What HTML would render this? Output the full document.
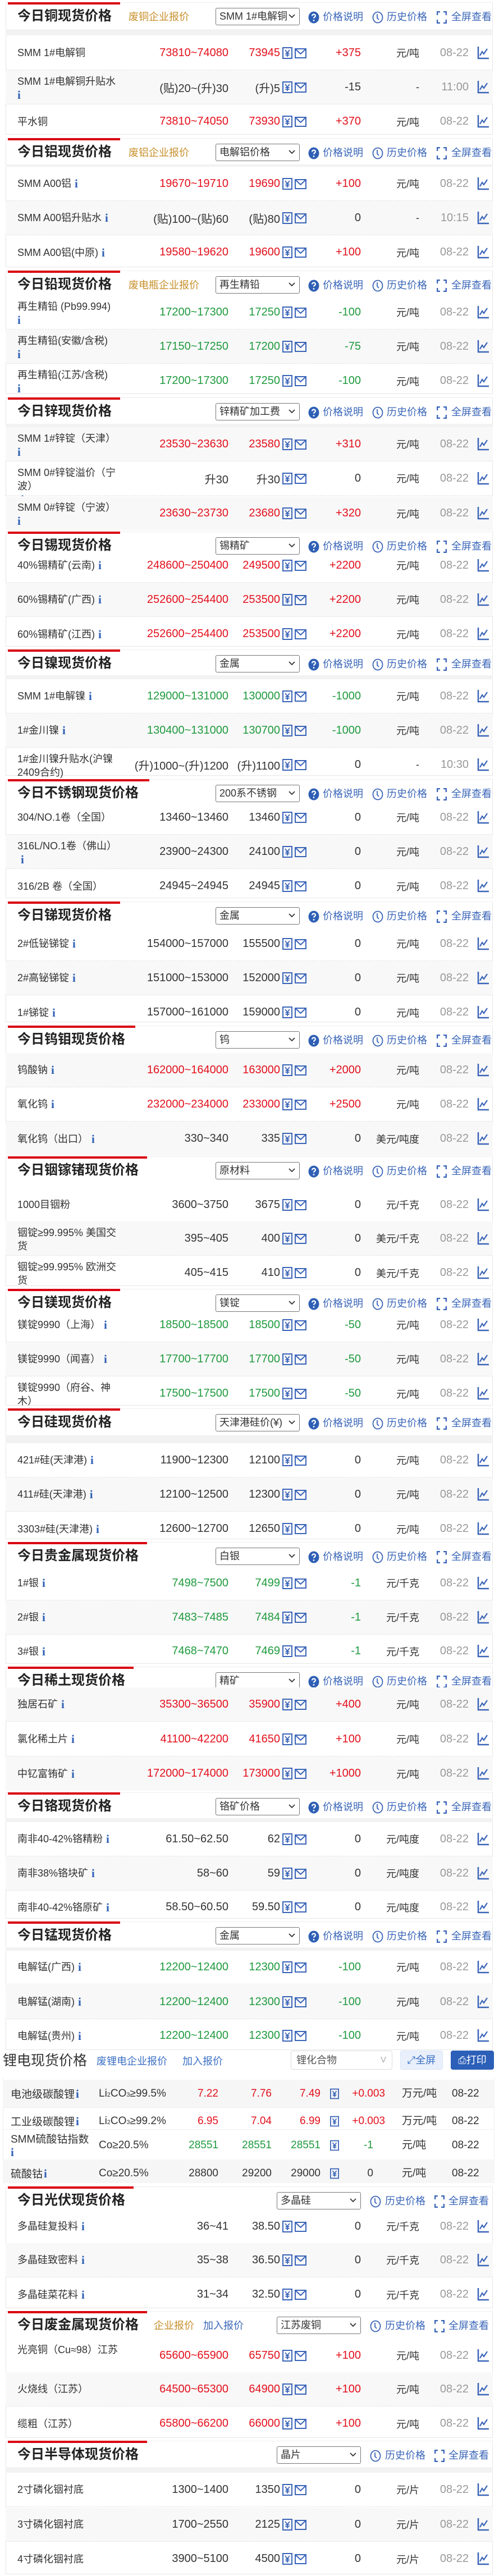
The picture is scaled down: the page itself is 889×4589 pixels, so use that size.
<!DOCTYPE html>
<html><head><meta charset="utf-8">
<style>
*{margin:0;padding:0;box-sizing:border-box}
body{width:889px;height:4586px;position:relative;background:#fff;font-family:"Liberation Sans","Noto Sans CJK SC",sans-serif;color:#333;overflow:hidden}
.sec{position:absolute;left:10px;width:868px;border:1px solid #e6e6e6;border-top:1px solid #eee;background:#fff}
.bar{position:absolute;left:3px;top:-1px;height:4px;background:#d9000f}
.tt{position:absolute;left:20px;top:7px;font-size:24px;font-weight:bold;line-height:34px;color:#222;white-space:nowrap}
.lk{position:absolute;top:12px;font-size:18px;line-height:26px;color:#c78f2a;white-space:nowrap}
.bl{color:#3a66b8}
.sel{position:absolute;left:373px;top:9px;width:150px;height:31px;border:1px solid #777;border-radius:3px;font-size:18px;line-height:29px;padding-left:6px;white-space:nowrap;overflow:hidden;color:#333;background:#fff}
.sel svg{position:absolute;right:7px;top:10px}
.tl{position:absolute;top:12px;font-size:18px;line-height:26px;color:#3a66b8;white-space:nowrap}
.ic{position:absolute;top:15px}
.strip{position:absolute;left:10px;width:868px;background:#f2f2f2}
.r{position:absolute;left:10px;width:868px;height:61px;border-bottom:1px dashed #e2e2e2}
.g{background:#f8f8f8}
.r>div{position:absolute;top:0;bottom:0;display:flex;align-items:center;white-space:nowrap;font-size:20px}
.r .n{left:21px;width:190px;font-size:18px;line-height:24px;white-space:normal;display:block;padding-top:0}
.n span{display:block}
.a{left:150px;width:247px;justify-content:flex-end}
.b{left:400px;width:89px;justify-content:flex-end}
.c{left:540px;width:93px;justify-content:flex-end}
.u{left:640px;width:97px;justify-content:flex-end}
.r .u{font-size:18px}
.d{left:760px;width:65px;justify-content:flex-end;color:#999}
.R{color:#e3101c}.G{color:#1f9a3e}
.i{font-family:"Liberation Serif",serif;font-weight:bold;color:#2e5fb5;font-size:21px;margin-left:6px}
.iy{position:absolute;left:493px;top:20px}
.im{position:absolute;left:515px;top:22px}
.ch{position:absolute;left:840px;top:18px}
.nc{position:absolute;left:0;right:0;top:0;bottom:0;display:flex;align-items:center}
</style></head><body>
<svg width="0" height="0" style="position:absolute">
<defs>
<symbol id="yen" viewBox="0 0 18 21"><rect x="1" y="1" width="16" height="19" fill="none" stroke="#3a64b8" stroke-width="2"/><path d="M5 5l4 5 4-5M9 10v7M5.5 11h7M5.5 14h7" stroke="#3a64b8" stroke-width="1.8" fill="none"/></symbol>
<symbol id="mail" viewBox="0 0 21 18"><rect x="1" y="1" width="19" height="16" fill="none" stroke="#3a64b8" stroke-width="2"/><path d="M2 2l8.5 8 8.5-8" stroke="#3a64b8" stroke-width="2" fill="none"/></symbol>
<symbol id="chart" viewBox="0 0 21 24"><path d="M2 1v21h19" stroke="#3a64b8" stroke-width="2.5" fill="none"/><path d="M5 17l4-7 3 4 6-9" stroke="#3a64b8" stroke-width="2.2" fill="none"/></symbol>
<symbol id="q" viewBox="0 0 20 22"><ellipse cx="10" cy="11" rx="9.5" ry="10.5" fill="#2e5fb5"/><path d="M7 8.5c0-2 1.5-3 3-3s3 1 3 2.8c0 2-3 2.2-3 4.5" stroke="#fff" stroke-width="2.2" fill="none"/><circle cx="10" cy="16.5" r="1.4" fill="#fff"/></symbol>
<symbol id="clk" viewBox="0 0 20 22"><ellipse cx="10" cy="11" rx="8.5" ry="9.5" fill="none" stroke="#3a64b8" stroke-width="1.8"/><path d="M9 5v7l3 3" stroke="#3a64b8" stroke-width="1.8" fill="none"/></symbol>
<symbol id="fs" viewBox="0 0 18 22"><path d="M1 7V1h5M12 1h5v6M17 15v6h-5M6 21H1v-6" stroke="#3a64b8" stroke-width="2.6" fill="none"/></symbol>
<symbol id="dn" viewBox="0 0 12 8"><path d="M1 1l5 5 5-5" stroke="#333" stroke-width="1.8" fill="none"/></symbol>
</defs></svg>

<!-- 1 铜 -->
<div class="sec" style="top:4px;height:236px"><div class="bar" style="width:200px"></div><div class="tt">今日铜现货价格</div><div class="lk" style="left:218px">废铜企业报价</div><div class="sel">SMM 1#电解铜<svg width="12" height="8"><use href="#dn"/></svg></div>
<svg class="ic" style="left:538px" width="20" height="22"><use href="#q"/></svg><div class="tl" style="left:564px">价格说明</div><svg class="ic" style="left:652px" width="20" height="22"><use href="#clk"/></svg><div class="tl" style="left:678px">历史价格</div><svg class="ic" style="left:767px" width="18" height="22"><use href="#fs"/></svg><div class="tl" style="left:793px">全屏查看</div></div>
<div class="strip" style="top:52px;height:11px"></div>
<div class="r" style="top:64px"><div class="n"><div class="nc">SMM 1#电解铜</div></div><div class="a R">73810~74080</div><div class="b R">73945</div><svg class="iy" width="18" height="21"><use href="#yen"/></svg><svg class="im" width="21" height="18"><use href="#mail"/></svg><div class="c R">+375</div><div class="u">元/吨</div><div class="d">08-22</div><svg class="ch" width="21" height="24"><use href="#chart"/></svg></div>
<div class="r g" style="top:125px"><div class="n" style="padding-top:8px">SMM 1#电解铜升贴水<span class="i" style="margin:0">i</span></div><div class="a">(贴)20~(升)30</div><div class="b">(升)5</div><svg class="iy" width="18" height="21"><use href="#yen"/></svg><svg class="im" width="21" height="18"><use href="#mail"/></svg><div class="c">-15</div><div class="u">-</div><div class="d">11:00</div><svg class="ch" width="21" height="24"><use href="#chart"/></svg></div>
<div class="r" style="top:186px;border:0"><div class="n"><div class="nc">平水铜</div></div><div class="a R">73810~74050</div><div class="b R">73930</div><svg class="iy" width="18" height="21"><use href="#yen"/></svg><svg class="im" width="21" height="18"><use href="#mail"/></svg><div class="c R">+370</div><div class="u">元/吨</div><div class="d">08-22</div><svg class="ch" width="21" height="24"><use href="#chart"/></svg></div>

<!-- 2 铝 -->
<div class="sec" style="top:246px;height:230px"><div class="bar" style="width:200px"></div><div class="tt">今日铝现货价格</div><div class="lk" style="left:218px">废铝企业报价</div><div class="sel">电解铝价格<svg width="12" height="8"><use href="#dn"/></svg></div>
<svg class="ic" style="left:538px" width="20" height="22"><use href="#q"/></svg><div class="tl" style="left:564px">价格说明</div><svg class="ic" style="left:652px" width="20" height="22"><use href="#clk"/></svg><div class="tl" style="left:678px">历史价格</div><svg class="ic" style="left:767px" width="18" height="22"><use href="#fs"/></svg><div class="tl" style="left:793px">全屏查看</div></div>
<div class="strip" style="top:293px;height:4px"></div>
<div class="r" style="top:297px"><div class="n"><div class="nc">SMM A00铝<span class="i">i</span></div></div><div class="a R">19670~19710</div><div class="b R">19690</div><svg class="iy" width="18" height="21"><use href="#yen"/></svg><svg class="im" width="21" height="18"><use href="#mail"/></svg><div class="c R">+100</div><div class="u">元/吨</div><div class="d">08-22</div><svg class="ch" width="21" height="24"><use href="#chart"/></svg></div>
<div class="r g" style="top:358px"><div class="n"><div class="nc">SMM A00铝升贴水<span class="i">i</span></div></div><div class="a">(贴)100~(贴)60</div><div class="b">(贴)80</div><svg class="iy" width="18" height="21"><use href="#yen"/></svg><svg class="im" width="21" height="18"><use href="#mail"/></svg><div class="c">0</div><div class="u">-</div><div class="d">10:15</div><svg class="ch" width="21" height="24"><use href="#chart"/></svg></div>
<div class="r" style="top:419px;border:0"><div class="n"><div class="nc">SMM A00铝(中原)<span class="i">i</span></div></div><div class="a R">19580~19620</div><div class="b R">19600</div><svg class="iy" width="18" height="21"><use href="#yen"/></svg><svg class="im" width="21" height="18"><use href="#mail"/></svg><div class="c R">+100</div><div class="u">元/吨</div><div class="d">08-22</div><svg class="ch" width="21" height="24"><use href="#chart"/></svg></div>

<!-- 3 铅 -->
<div class="sec" style="top:482px;height:220px"><div class="bar" style="width:200px"></div><div class="tt">今日铅现货价格</div><div class="lk" style="left:218px">废电瓶企业报价</div><div class="sel">再生精铅<svg width="12" height="8"><use href="#dn"/></svg></div>
<svg class="ic" style="left:538px" width="20" height="22"><use href="#q"/></svg><div class="tl" style="left:564px">价格说明</div><svg class="ic" style="left:652px" width="20" height="22"><use href="#clk"/></svg><div class="tl" style="left:678px">历史价格</div><svg class="ic" style="left:767px" width="18" height="22"><use href="#fs"/></svg><div class="tl" style="left:793px">全屏查看</div></div>
<div class="r" style="top:526px"><div class="n" style="padding-top:8px">再生精铅 (Pb99.994)<span class="i" style="display:block;margin:0">i</span></div><div class="a G">17200~17300</div><div class="b G">17250</div><svg class="iy" width="18" height="21"><use href="#yen"/></svg><svg class="im" width="21" height="18"><use href="#mail"/></svg><div class="c G">-100</div><div class="u">元/吨</div><div class="d">08-22</div><svg class="ch" width="21" height="24"><use href="#chart"/></svg></div>
<div class="r g" style="top:587px"><div class="n" style="padding-top:8px">再生精铅(安徽/含税)<span class="i" style="display:block;margin:0">i</span></div><div class="a G">17150~17250</div><div class="b G">17200</div><svg class="iy" width="18" height="21"><use href="#yen"/></svg><svg class="im" width="21" height="18"><use href="#mail"/></svg><div class="c G">-75</div><div class="u">元/吨</div><div class="d">08-22</div><svg class="ch" width="21" height="24"><use href="#chart"/></svg></div>
<div class="r" style="top:648px;border:0"><div class="n" style="padding-top:8px">再生精铅(江苏/含税)<span class="i" style="display:block;margin:0">i</span></div><div class="a G">17200~17300</div><div class="b G">17250</div><svg class="iy" width="18" height="21"><use href="#yen"/></svg><svg class="im" width="21" height="18"><use href="#mail"/></svg><div class="c G">-100</div><div class="u">元/吨</div><div class="d">08-22</div><svg class="ch" width="21" height="24"><use href="#chart"/></svg></div>

<!-- 4 锌 -->
<div class="sec" style="top:708px;height:233px"><div class="bar" style="width:200px"></div><div class="tt">今日锌现货价格</div><div class="sel">锌精矿加工费<svg width="12" height="8"><use href="#dn"/></svg></div>
<svg class="ic" style="left:538px" width="20" height="22"><use href="#q"/></svg><div class="tl" style="left:564px">价格说明</div><svg class="ic" style="left:652px" width="20" height="22"><use href="#clk"/></svg><div class="tl" style="left:678px">历史价格</div><svg class="ic" style="left:767px" width="18" height="22"><use href="#fs"/></svg><div class="tl" style="left:793px">全屏查看</div></div>
<div class="strip" style="top:755px;height:6px"></div>
<div class="r g" style="top:761px"><div class="n" style="padding-top:8px">SMM 1#锌锭（天津）<span class="i" style="display:block;margin:0">i</span></div><div class="a R">23530~23630</div><div class="b R">23580</div><svg class="iy" width="18" height="21"><use href="#yen"/></svg><svg class="im" width="21" height="18"><use href="#mail"/></svg><div class="c R">+310</div><div class="u">元/吨</div><div class="d">08-22</div><svg class="ch" width="21" height="24"><use href="#chart"/></svg></div>
<div class="r" style="top:822px"><div class="n" style="padding-top:8px">SMM 0#锌锭溢价（宁波）<span class="i">i</span></div><div class="a">升30</div><div class="b">升30</div><svg class="iy" width="18" height="21"><use href="#yen"/></svg><svg class="im" width="21" height="18"><use href="#mail"/></svg><div class="c">0</div><div class="u">元/吨</div><div class="d">08-22</div><svg class="ch" width="21" height="24"><use href="#chart"/></svg></div>
<div class="r g" style="top:884px;border:0"><div class="n" style="padding-top:8px">SMM 0#锌锭（宁波）<span class="i" style="display:block;margin:0">i</span></div><div class="a R">23630~23730</div><div class="b R">23680</div><svg class="iy" width="18" height="21"><use href="#yen"/></svg><svg class="im" width="21" height="18"><use href="#mail"/></svg><div class="c R">+320</div><div class="u">元/吨</div><div class="d">08-22</div><svg class="ch" width="21" height="24"><use href="#chart"/></svg></div>

<!-- 5 锡 -->
<div class="sec" style="top:947px;height:205px"><div class="bar" style="width:200px"></div><div class="tt">今日锡现货价格</div><div class="sel">锡精矿<svg width="12" height="8"><use href="#dn"/></svg></div>
<svg class="ic" style="left:538px" width="20" height="22"><use href="#q"/></svg><div class="tl" style="left:564px">价格说明</div><svg class="ic" style="left:652px" width="20" height="22"><use href="#clk"/></svg><div class="tl" style="left:678px">历史价格</div><svg class="ic" style="left:767px" width="18" height="22"><use href="#fs"/></svg><div class="tl" style="left:793px">全屏查看</div></div>
<div class="r" style="top:977px"><div class="n"><div class="nc">40%锡精矿(云南)<span class="i">i</span></div></div><div class="a R">248600~250400</div><div class="b R">249500</div><svg class="iy" width="18" height="21"><use href="#yen"/></svg><svg class="im" width="21" height="18"><use href="#mail"/></svg><div class="c R">+2200</div><div class="u">元/吨</div><div class="d">08-22</div><svg class="ch" width="21" height="24"><use href="#chart"/></svg></div>
<div class="r g" style="top:1038px"><div class="n"><div class="nc">60%锡精矿(广西)<span class="i">i</span></div></div><div class="a R">252600~254400</div><div class="b R">253500</div><svg class="iy" width="18" height="21"><use href="#yen"/></svg><svg class="im" width="21" height="18"><use href="#mail"/></svg><div class="c R">+2200</div><div class="u">元/吨</div><div class="d">08-22</div><svg class="ch" width="21" height="24"><use href="#chart"/></svg></div>
<div class="r" style="top:1099px;border:0"><div class="n"><div class="nc">60%锡精矿(江西)<span class="i">i</span></div></div><div class="a R">252600~254400</div><div class="b R">253500</div><svg class="iy" width="18" height="21"><use href="#yen"/></svg><svg class="im" width="21" height="18"><use href="#mail"/></svg><div class="c R">+2200</div><div class="u">元/吨</div><div class="d">08-22</div><svg class="ch" width="21" height="24"><use href="#chart"/></svg></div>

<!-- 6 镍 -->
<div class="sec" style="top:1157px;height:225px"><div class="bar" style="width:200px"></div><div class="tt">今日镍现货价格</div><div class="sel">金属<svg width="12" height="8"><use href="#dn"/></svg></div>
<svg class="ic" style="left:538px" width="20" height="22"><use href="#q"/></svg><div class="tl" style="left:564px">价格说明</div><svg class="ic" style="left:652px" width="20" height="22"><use href="#clk"/></svg><div class="tl" style="left:678px">历史价格</div><svg class="ic" style="left:767px" width="18" height="22"><use href="#fs"/></svg><div class="tl" style="left:793px">全屏查看</div></div>
<div class="strip" style="top:1203px;height:7px"></div>
<div class="r" style="top:1210px"><div class="n"><div class="nc">SMM 1#电解镍<span class="i">i</span></div></div><div class="a G">129000~131000</div><div class="b G">130000</div><svg class="iy" width="18" height="21"><use href="#yen"/></svg><svg class="im" width="21" height="18"><use href="#mail"/></svg><div class="c G">-1000</div><div class="u">元/吨</div><div class="d">08-22</div><svg class="ch" width="21" height="24"><use href="#chart"/></svg></div>
<div class="r g" style="top:1271px"><div class="n"><div class="nc">1#金川镍<span class="i">i</span></div></div><div class="a G">130400~131000</div><div class="b G">130700</div><svg class="iy" width="18" height="21"><use href="#yen"/></svg><svg class="im" width="21" height="18"><use href="#mail"/></svg><div class="c G">-1000</div><div class="u">元/吨</div><div class="d">08-22</div><svg class="ch" width="21" height="24"><use href="#chart"/></svg></div>
<div class="r" style="top:1332px;border:0"><div class="n" style="padding-top:8px">1#金川镍升贴水(沪镍2409合约)</div><div class="a">(升)1000~(升)1200</div><div class="b">(升)1100</div><svg class="iy" width="18" height="21"><use href="#yen"/></svg><svg class="im" width="21" height="18"><use href="#mail"/></svg><div class="c">0</div><div class="u">-</div><div class="d">10:30</div><svg class="ch" width="21" height="24"><use href="#chart"/></svg></div>

<!-- 7 不锈钢 -->
<div class="sec" style="top:1388px;height:212px"><div class="bar" style="width:252px"></div><div class="tt">今日不锈钢现货价格</div><div class="sel">200系不锈钢<svg width="12" height="8"><use href="#dn"/></svg></div>
<svg class="ic" style="left:538px" width="20" height="22"><use href="#q"/></svg><div class="tl" style="left:564px">价格说明</div><svg class="ic" style="left:652px" width="20" height="22"><use href="#clk"/></svg><div class="tl" style="left:678px">历史价格</div><svg class="ic" style="left:767px" width="18" height="22"><use href="#fs"/></svg><div class="tl" style="left:793px">全屏查看</div></div>
<div class="r" style="top:1426px"><div class="n"><div class="nc">304/NO.1卷（全国）</div></div><div class="a">13460~13460</div><div class="b">13460</div><svg class="iy" width="18" height="21"><use href="#yen"/></svg><svg class="im" width="21" height="18"><use href="#mail"/></svg><div class="c">0</div><div class="u">元/吨</div><div class="d">08-22</div><svg class="ch" width="21" height="24"><use href="#chart"/></svg></div>
<div class="r g" style="top:1487px"><div class="n" style="padding-top:8px">316L/NO.1卷（佛山）<span class="i">i</span></div><div class="a">23900~24300</div><div class="b">24100</div><svg class="iy" width="18" height="21"><use href="#yen"/></svg><svg class="im" width="21" height="18"><use href="#mail"/></svg><div class="c">0</div><div class="u">元/吨</div><div class="d">08-22</div><svg class="ch" width="21" height="24"><use href="#chart"/></svg></div>
<div class="r" style="top:1548px;border:0"><div class="n"><div class="nc">316/2B 卷（全国）</div></div><div class="a">24945~24945</div><div class="b">24945</div><svg class="iy" width="18" height="21"><use href="#yen"/></svg><svg class="im" width="21" height="18"><use href="#mail"/></svg><div class="c">0</div><div class="u">元/吨</div><div class="d">08-22</div><svg class="ch" width="21" height="24"><use href="#chart"/></svg></div>

<!-- 8 锑 -->
<div class="sec" style="top:1606px;height:215px"><div class="bar" style="width:200px"></div><div class="tt">今日锑现货价格</div><div class="sel">金属<svg width="12" height="8"><use href="#dn"/></svg></div>
<svg class="ic" style="left:538px" width="20" height="22"><use href="#q"/></svg><div class="tl" style="left:564px">价格说明</div><svg class="ic" style="left:652px" width="20" height="22"><use href="#clk"/></svg><div class="tl" style="left:678px">历史价格</div><svg class="ic" style="left:767px" width="18" height="22"><use href="#fs"/></svg><div class="tl" style="left:793px">全屏查看</div></div>
<div class="r" style="top:1651px"><div class="n"><div class="nc">2#低铋锑锭<span class="i">i</span></div></div><div class="a">154000~157000</div><div class="b">155500</div><svg class="iy" width="18" height="21"><use href="#yen"/></svg><svg class="im" width="21" height="18"><use href="#mail"/></svg><div class="c">0</div><div class="u">元/吨</div><div class="d">08-22</div><svg class="ch" width="21" height="24"><use href="#chart"/></svg></div>
<div class="r g" style="top:1712px"><div class="n"><div class="nc">2#高铋锑锭<span class="i">i</span></div></div><div class="a">151000~153000</div><div class="b">152000</div><svg class="iy" width="18" height="21"><use href="#yen"/></svg><svg class="im" width="21" height="18"><use href="#mail"/></svg><div class="c">0</div><div class="u">元/吨</div><div class="d">08-22</div><svg class="ch" width="21" height="24"><use href="#chart"/></svg></div>
<div class="r" style="top:1773px;border:0"><div class="n"><div class="nc">1#锑锭<span class="i">i</span></div></div><div class="a">157000~161000</div><div class="b">159000</div><svg class="iy" width="18" height="21"><use href="#yen"/></svg><svg class="im" width="21" height="18"><use href="#mail"/></svg><div class="c">0</div><div class="u">元/吨</div><div class="d">08-22</div><svg class="ch" width="21" height="24"><use href="#chart"/></svg></div>

<!-- 9 钨钼 -->
<div class="sec" style="top:1827px;height:228px"><div class="bar" style="width:227px"></div><div class="tt">今日钨钼现货价格</div><div class="sel">钨<svg width="12" height="8"><use href="#dn"/></svg></div>
<svg class="ic" style="left:538px" width="20" height="22"><use href="#q"/></svg><div class="tl" style="left:564px">价格说明</div><svg class="ic" style="left:652px" width="20" height="22"><use href="#clk"/></svg><div class="tl" style="left:678px">历史价格</div><svg class="ic" style="left:767px" width="18" height="22"><use href="#fs"/></svg><div class="tl" style="left:793px">全屏查看</div></div>
<div class="r g" style="top:1876px"><div class="n"><div class="nc">钨酸钠<span class="i">i</span></div></div><div class="a R">162000~164000</div><div class="b R">163000</div><svg class="iy" width="18" height="21"><use href="#yen"/></svg><svg class="im" width="21" height="18"><use href="#mail"/></svg><div class="c R">+2000</div><div class="u">元/吨</div><div class="d">08-22</div><svg class="ch" width="21" height="24"><use href="#chart"/></svg></div>
<div class="r" style="top:1937px"><div class="n"><div class="nc">氧化钨<span class="i">i</span></div></div><div class="a R">232000~234000</div><div class="b R">233000</div><svg class="iy" width="18" height="21"><use href="#yen"/></svg><svg class="im" width="21" height="18"><use href="#mail"/></svg><div class="c R">+2500</div><div class="u">元/吨</div><div class="d">08-22</div><svg class="ch" width="21" height="24"><use href="#chart"/></svg></div>
<div class="r g" style="top:1998px;border:0"><div class="n"><div class="nc">氧化钨（出口）<span class="i">i</span></div></div><div class="a">330~340</div><div class="b">335</div><svg class="iy" width="18" height="21"><use href="#yen"/></svg><svg class="im" width="21" height="18"><use href="#mail"/></svg><div class="c">0</div><div class="u">美元/吨度</div><div class="d">08-22</div><svg class="ch" width="21" height="24"><use href="#chart"/></svg></div>

<!-- 10 铟镓锗 -->
<div class="sec" style="top:2060px;height:231px"><div class="bar" style="width:248px"></div><div class="tt">今日铟镓锗现货价格</div><div class="sel">原材料<svg width="12" height="8"><use href="#dn"/></svg></div>
<svg class="ic" style="left:538px" width="20" height="22"><use href="#q"/></svg><div class="tl" style="left:564px">价格说明</div><svg class="ic" style="left:652px" width="20" height="22"><use href="#clk"/></svg><div class="tl" style="left:678px">历史价格</div><svg class="ic" style="left:767px" width="18" height="22"><use href="#fs"/></svg><div class="tl" style="left:793px">全屏查看</div></div>
<div class="r" style="top:2116px"><div class="n"><div class="nc">1000目铟粉</div></div><div class="a">3600~3750</div><div class="b">3675</div><svg class="iy" width="18" height="21"><use href="#yen"/></svg><svg class="im" width="21" height="18"><use href="#mail"/></svg><div class="c">0</div><div class="u">元/千克</div><div class="d">08-22</div><svg class="ch" width="21" height="24"><use href="#chart"/></svg></div>
<div class="r g" style="top:2176px"><div class="n" style="padding-top:8px">铟锭≥99.995% 美国交货</div><div class="a">395~405</div><div class="b">400</div><svg class="iy" width="18" height="21"><use href="#yen"/></svg><svg class="im" width="21" height="18"><use href="#mail"/></svg><div class="c">0</div><div class="u">美元/千克</div><div class="d">08-22</div><svg class="ch" width="21" height="24"><use href="#chart"/></svg></div>
<div class="r" style="top:2237px;border:0"><div class="n" style="padding-top:8px">铟锭≥99.995% 欧洲交货</div><div class="a">405~415</div><div class="b">410</div><svg class="iy" width="18" height="21"><use href="#yen"/></svg><svg class="im" width="21" height="18"><use href="#mail"/></svg><div class="c">0</div><div class="u">美元/千克</div><div class="d">08-22</div><svg class="ch" width="21" height="24"><use href="#chart"/></svg></div>

<!-- 11 镁 -->
<div class="sec" style="top:2296px;height:208px"><div class="bar" style="width:200px"></div><div class="tt">今日镁现货价格</div><div class="sel">镁锭<svg width="12" height="8"><use href="#dn"/></svg></div>
<svg class="ic" style="left:538px" width="20" height="22"><use href="#q"/></svg><div class="tl" style="left:564px">价格说明</div><svg class="ic" style="left:652px" width="20" height="22"><use href="#clk"/></svg><div class="tl" style="left:678px">历史价格</div><svg class="ic" style="left:767px" width="18" height="22"><use href="#fs"/></svg><div class="tl" style="left:793px">全屏查看</div></div>
<div class="r" style="top:2330px"><div class="n"><div class="nc">镁锭9990（上海）<span class="i">i</span></div></div><div class="a G">18500~18500</div><div class="b G">18500</div><svg class="iy" width="18" height="21"><use href="#yen"/></svg><svg class="im" width="21" height="18"><use href="#mail"/></svg><div class="c G">-50</div><div class="u">元/吨</div><div class="d">08-22</div><svg class="ch" width="21" height="24"><use href="#chart"/></svg></div>
<div class="r g" style="top:2391px"><div class="n"><div class="nc">镁锭9990（闻喜）<span class="i">i</span></div></div><div class="a G">17700~17700</div><div class="b G">17700</div><svg class="iy" width="18" height="21"><use href="#yen"/></svg><svg class="im" width="21" height="18"><use href="#mail"/></svg><div class="c G">-50</div><div class="u">元/吨</div><div class="d">08-22</div><svg class="ch" width="21" height="24"><use href="#chart"/></svg></div>
<div class="r" style="top:2452px;border:0"><div class="n" style="padding-top:8px">镁锭9990（府谷、神木）<span class="i">i</span></div><div class="a G">17500~17500</div><div class="b G">17500</div><svg class="iy" width="18" height="21"><use href="#yen"/></svg><svg class="im" width="21" height="18"><use href="#mail"/></svg><div class="c G">-50</div><div class="u">元/吨</div><div class="d">08-22</div><svg class="ch" width="21" height="24"><use href="#chart"/></svg></div>

<!-- 12 硅 -->
<div class="sec" style="top:2509px;height:233px"><div class="bar" style="width:200px"></div><div class="tt">今日硅现货价格</div><div class="sel">天津港硅价(¥)<svg width="12" height="8"><use href="#dn"/></svg></div>
<svg class="ic" style="left:538px" width="20" height="22"><use href="#q"/></svg><div class="tl" style="left:564px">价格说明</div><svg class="ic" style="left:652px" width="20" height="22"><use href="#clk"/></svg><div class="tl" style="left:678px">历史价格</div><svg class="ic" style="left:767px" width="18" height="22"><use href="#fs"/></svg><div class="tl" style="left:793px">全屏查看</div></div>
<div class="strip" style="top:2557px;height:14px"></div>
<div class="r" style="top:2571px"><div class="n"><div class="nc">421#硅(天津港)<span class="i">i</span></div></div><div class="a">11900~12300</div><div class="b">12100</div><svg class="iy" width="18" height="21"><use href="#yen"/></svg><svg class="im" width="21" height="18"><use href="#mail"/></svg><div class="c">0</div><div class="u">元/吨</div><div class="d">08-22</div><svg class="ch" width="21" height="24"><use href="#chart"/></svg></div>
<div class="r g" style="top:2632px"><div class="n"><div class="nc">411#硅(天津港)<span class="i">i</span></div></div><div class="a">12100~12500</div><div class="b">12300</div><svg class="iy" width="18" height="21"><use href="#yen"/></svg><svg class="im" width="21" height="18"><use href="#mail"/></svg><div class="c">0</div><div class="u">元/吨</div><div class="d">08-22</div><svg class="ch" width="21" height="24"><use href="#chart"/></svg></div>
<div class="r" style="top:2693px;border:0"><div class="n"><div class="nc">3303#硅(天津港)<span class="i">i</span></div></div><div class="a">12600~12700</div><div class="b">12650</div><svg class="iy" width="18" height="21"><use href="#yen"/></svg><svg class="im" width="21" height="18"><use href="#mail"/></svg><div class="c">0</div><div class="u">元/吨</div><div class="d">08-22</div><svg class="ch" width="21" height="24"><use href="#chart"/></svg></div>

<!-- 13 贵金属 -->
<div class="sec" style="top:2747px;height:217px"><div class="bar" style="width:248px"></div><div class="tt">今日贵金属现货价格</div><div class="sel">白银<svg width="12" height="8"><use href="#dn"/></svg></div>
<svg class="ic" style="left:538px" width="20" height="22"><use href="#q"/></svg><div class="tl" style="left:564px">价格说明</div><svg class="ic" style="left:652px" width="20" height="22"><use href="#clk"/></svg><div class="tl" style="left:678px">历史价格</div><svg class="ic" style="left:767px" width="18" height="22"><use href="#fs"/></svg><div class="tl" style="left:793px">全屏查看</div></div>
<div class="r" style="top:2790px"><div class="n"><div class="nc">1#银<span class="i">i</span></div></div><div class="a G">7498~7500</div><div class="b G">7499</div><svg class="iy" width="18" height="21"><use href="#yen"/></svg><svg class="im" width="21" height="18"><use href="#mail"/></svg><div class="c G">-1</div><div class="u">元/千克</div><div class="d">08-22</div><svg class="ch" width="21" height="24"><use href="#chart"/></svg></div>
<div class="r g" style="top:2851px"><div class="n"><div class="nc">2#银<span class="i">i</span></div></div><div class="a G">7483~7485</div><div class="b G">7484</div><svg class="iy" width="18" height="21"><use href="#yen"/></svg><svg class="im" width="21" height="18"><use href="#mail"/></svg><div class="c G">-1</div><div class="u">元/千克</div><div class="d">08-22</div><svg class="ch" width="21" height="24"><use href="#chart"/></svg></div>
<div class="r" style="top:2911px;border:0"><div class="n"><div class="nc">3#银<span class="i">i</span></div></div><div class="a G">7468~7470</div><div class="b G">7469</div><svg class="iy" width="18" height="21"><use href="#yen"/></svg><svg class="im" width="21" height="18"><use href="#mail"/></svg><div class="c G">-1</div><div class="u">元/千克</div><div class="d">08-22</div><svg class="ch" width="21" height="24"><use href="#chart"/></svg></div>

<!-- 14 稀土 -->
<div class="sec" style="top:2969px;height:219px"><div class="bar" style="width:224px"></div><div class="tt">今日稀土现货价格</div><div class="sel">精矿<svg width="12" height="8"><use href="#dn"/></svg></div>
<svg class="ic" style="left:538px" width="20" height="22"><use href="#q"/></svg><div class="tl" style="left:564px">价格说明</div><svg class="ic" style="left:652px" width="20" height="22"><use href="#clk"/></svg><div class="tl" style="left:678px">历史价格</div><svg class="ic" style="left:767px" width="18" height="22"><use href="#fs"/></svg><div class="tl" style="left:793px">全屏查看</div></div>
<div class="r g" style="top:3006px"><div class="n"><div class="nc">独居石矿<span class="i">i</span></div></div><div class="a R">35300~36500</div><div class="b R">35900</div><svg class="iy" width="18" height="21"><use href="#yen"/></svg><svg class="im" width="21" height="18"><use href="#mail"/></svg><div class="c R">+400</div><div class="u">元/吨</div><div class="d">08-22</div><svg class="ch" width="21" height="24"><use href="#chart"/></svg></div>
<div class="r" style="top:3068px"><div class="n"><div class="nc">氯化稀土片<span class="i">i</span></div></div><div class="a R">41100~42200</div><div class="b R">41650</div><svg class="iy" width="18" height="21"><use href="#yen"/></svg><svg class="im" width="21" height="18"><use href="#mail"/></svg><div class="c R">+100</div><div class="u">元/吨</div><div class="d">08-22</div><svg class="ch" width="21" height="24"><use href="#chart"/></svg></div>
<div class="r g" style="top:3129px;border:0"><div class="n"><div class="nc">中钇富铕矿<span class="i">i</span></div></div><div class="a R">172000~174000</div><div class="b R">173000</div><svg class="iy" width="18" height="21"><use href="#yen"/></svg><svg class="im" width="21" height="18"><use href="#mail"/></svg><div class="c R">+1000</div><div class="u">元/吨</div><div class="d">08-22</div><svg class="ch" width="21" height="24"><use href="#chart"/></svg></div>

<!-- 15 铬 -->
<div class="sec" style="top:3193px;height:225px"><div class="bar" style="width:200px"></div><div class="tt">今日铬现货价格</div><div class="sel">铬矿价格<svg width="12" height="8"><use href="#dn"/></svg></div>
<svg class="ic" style="left:538px" width="20" height="22"><use href="#q"/></svg><div class="tl" style="left:564px">价格说明</div><svg class="ic" style="left:652px" width="20" height="22"><use href="#clk"/></svg><div class="tl" style="left:678px">历史价格</div><svg class="ic" style="left:767px" width="18" height="22"><use href="#fs"/></svg><div class="tl" style="left:793px">全屏查看</div></div>
<div class="strip" style="top:3239px;height:7px"></div>
<div class="r" style="top:3246px"><div class="n"><div class="nc">南非40-42%铬精粉<span class="i">i</span></div></div><div class="a">61.50~62.50</div><div class="b">62</div><svg class="iy" width="18" height="21"><use href="#yen"/></svg><svg class="im" width="21" height="18"><use href="#mail"/></svg><div class="c">0</div><div class="u">元/吨度</div><div class="d">08-22</div><svg class="ch" width="21" height="24"><use href="#chart"/></svg></div>
<div class="r g" style="top:3307px"><div class="n"><div class="nc">南非38%铬块矿<span class="i">i</span></div></div><div class="a">58~60</div><div class="b">59</div><svg class="iy" width="18" height="21"><use href="#yen"/></svg><svg class="im" width="21" height="18"><use href="#mail"/></svg><div class="c">0</div><div class="u">元/吨度</div><div class="d">08-22</div><svg class="ch" width="21" height="24"><use href="#chart"/></svg></div>
<div class="r" style="top:3367px;border:0"><div class="n"><div class="nc">南非40-42%铬原矿<span class="i">i</span></div></div><div class="a">58.50~60.50</div><div class="b">59.50</div><svg class="iy" width="18" height="21"><use href="#yen"/></svg><svg class="im" width="21" height="18"><use href="#mail"/></svg><div class="c">0</div><div class="u">元/吨度</div><div class="d">08-22</div><svg class="ch" width="21" height="24"><use href="#chart"/></svg></div>

<!-- 16 锰 -->
<div class="sec" style="top:3423px;height:229px"><div class="bar" style="width:200px"></div><div class="tt">今日锰现货价格</div><div class="sel">金属<svg width="12" height="8"><use href="#dn"/></svg></div>
<svg class="ic" style="left:538px" width="20" height="22"><use href="#q"/></svg><div class="tl" style="left:564px">价格说明</div><svg class="ic" style="left:652px" width="20" height="22"><use href="#clk"/></svg><div class="tl" style="left:678px">历史价格</div><svg class="ic" style="left:767px" width="18" height="22"><use href="#fs"/></svg><div class="tl" style="left:793px">全屏查看</div></div>
<div class="strip" style="top:3469px;height:6px"></div>
<div class="r" style="top:3474px"><div class="n"><div class="nc">电解锰(广西)<span class="i">i</span></div></div><div class="a G">12200~12400</div><div class="b G">12300</div><svg class="iy" width="18" height="21"><use href="#yen"/></svg><svg class="im" width="21" height="18"><use href="#mail"/></svg><div class="c G">-100</div><div class="u">元/吨</div><div class="d">08-22</div><svg class="ch" width="21" height="24"><use href="#chart"/></svg></div>
<div class="r g" style="top:3536px"><div class="n"><div class="nc">电解锰(湖南)<span class="i">i</span></div></div><div class="a G">12200~12400</div><div class="b G">12300</div><svg class="iy" width="18" height="21"><use href="#yen"/></svg><svg class="im" width="21" height="18"><use href="#mail"/></svg><div class="c G">-100</div><div class="u">元/吨</div><div class="d">08-22</div><svg class="ch" width="21" height="24"><use href="#chart"/></svg></div>
<div class="r" style="top:3596px;border:0"><div class="n"><div class="nc">电解锰(贵州)<span class="i">i</span></div></div><div class="a G">12200~12400</div><div class="b G">12300</div><svg class="iy" width="18" height="21"><use href="#yen"/></svg><svg class="im" width="21" height="18"><use href="#mail"/></svg><div class="c G">-100</div><div class="u">元/吨</div><div class="d">08-22</div><svg class="ch" width="21" height="24"><use href="#chart"/></svg></div>

<!-- 17 锂电 -->
<div style="position:absolute;left:5px;top:3655px;font-size:25px;line-height:32px;color:#333">锂电现货价格</div>
<div style="position:absolute;left:172px;top:3659px;font-size:18px;line-height:26px;color:#3a6fc4">废锂电企业报价</div>
<div style="position:absolute;left:325px;top:3659px;font-size:18px;line-height:26px;color:#3a6fc4">加入报价</div>
<div style="position:absolute;left:518px;top:3653px;width:181px;height:34px;border:1px solid #ddd;border-radius:4px;font-size:18px;line-height:32px;padding-left:9px;color:#555">锂化合物<span style="position:absolute;right:10px;color:#aaa;font-size:15px">V</span></div>
<div style="position:absolute;left:713px;top:3653px;width:76px;height:34px;background:#e9f0fb;border:1px solid #d8e4f7;border-radius:4px;font-size:18px;line-height:32px;color:#3a6fc4;text-align:center">⤢全屏</div>
<div style="position:absolute;left:803px;top:3653px;width:77px;height:34px;background:#2c5fb8;border-radius:4px;font-size:18px;line-height:34px;color:#fff;text-align:center">⎙打印</div>
<div style="position:absolute;left:5px;top:3700px;width:876px;height:190px;border-left:1px solid #eee;border-right:1px solid #eee"></div>
<div style="position:absolute;left:5px;top:3705px;width:876px;height:50px;background:#f6f6f6;border-bottom:1px solid #eee"></div>
<div style="position:absolute;left:5px;top:3793px;width:876px;height:1px;background:#eee"></div>
<div style="position:absolute;left:5px;top:3847px;width:876px;height:42px;background:#f6f6f6"></div>
<div class="lr" style="position:absolute;left:0;top:0">
</div>
<style>
.L{position:absolute;font-size:19px;line-height:24px;white-space:nowrap}
.Lr{text-align:right}
</style>
<div class="L" style="left:19px;top:3718px">电池级碳酸锂<span class="i" style="margin-left:2px">i</span></div>
<div class="L" style="left:176px;top:3718px">Li<small style="font-size:11px">2</small>CO<small style="font-size:11px">3</small>≥99.5%</div>
<div class="L Lr R" style="left:300px;width:89px;top:3718px">7.22</div>
<div class="L Lr R" style="left:400px;width:84px;top:3718px">7.76</div>
<div class="L Lr R" style="left:490px;width:81px;top:3718px">7.49</div>
<svg style="position:absolute;left:588px;top:3720px" width="16" height="20"><use href="#yen"/></svg>
<div class="L Lr R" style="left:600px;width:86px;top:3718px">+0.003</div>
<div class="L" style="left:716px;top:3718px">万元/吨</div>
<div class="L" style="left:805px;top:3718px">08-22</div>

<div class="L" style="left:19px;top:3767px">工业级碳酸锂<span class="i" style="margin-left:2px">i</span></div>
<div class="L" style="left:176px;top:3767px">Li<small style="font-size:11px">2</small>CO<small style="font-size:11px">3</small>≥99.2%</div>
<div class="L Lr R" style="left:300px;width:89px;top:3767px">6.95</div>
<div class="L Lr R" style="left:400px;width:84px;top:3767px">7.04</div>
<div class="L Lr R" style="left:490px;width:81px;top:3767px">6.99</div>
<svg style="position:absolute;left:588px;top:3769px" width="16" height="20"><use href="#yen"/></svg>
<div class="L Lr R" style="left:600px;width:86px;top:3767px">+0.003</div>
<div class="L" style="left:716px;top:3767px">万元/吨</div>
<div class="L" style="left:805px;top:3767px">08-22</div>

<div class="L" style="left:19px;top:3800px">SMM硫酸钴指数</div>
<div class="L" style="left:19px;top:3822px"><span class="i" style="margin:0">i</span></div>
<div class="L" style="left:176px;top:3810px">Co≥20.5%</div>
<div class="L Lr G" style="left:300px;width:89px;top:3810px">28551</div>
<div class="L Lr G" style="left:400px;width:84px;top:3810px">28551</div>
<div class="L Lr G" style="left:490px;width:81px;top:3810px">28551</div>
<svg style="position:absolute;left:588px;top:3812px" width="16" height="20"><use href="#yen"/></svg>
<div class="L Lr G" style="left:600px;width:65px;top:3810px">-1</div>
<div class="L" style="left:716px;top:3810px">元/吨</div>
<div class="L" style="left:805px;top:3810px">08-22</div>

<div class="L" style="left:19px;top:3860px">硫酸钴<span class="i" style="margin-left:2px">i</span></div>
<div class="L" style="left:176px;top:3860px">Co≥20.5%</div>
<div class="L Lr" style="left:300px;width:89px;top:3860px">28800</div>
<div class="L Lr" style="left:400px;width:84px;top:3860px">29200</div>
<div class="L Lr" style="left:490px;width:81px;top:3860px">29000</div>
<svg style="position:absolute;left:588px;top:3862px" width="16" height="20"><use href="#yen"/></svg>
<div class="L Lr" style="left:600px;width:65px;top:3860px">0</div>
<div class="L" style="left:716px;top:3860px">元/吨</div>
<div class="L" style="left:805px;top:3860px">08-22</div>

<!-- 18 光伏 -->
<div class="sec" style="top:3895px;height:217px"><div class="bar" style="width:224px"></div><div class="tt">今日光伏现货价格</div><div class="sel" style="left:482px">多晶硅<svg width="12" height="8"><use href="#dn"/></svg></div>
<svg class="ic" style="left:648px" width="20" height="22"><use href="#clk"/></svg><div class="tl" style="left:675px">历史价格</div><svg class="ic" style="left:763px" width="18" height="22"><use href="#fs"/></svg><div class="tl" style="left:788px">全屏查看</div></div>
<div class="r" style="top:3936px"><div class="n"><div class="nc">多晶硅复投料<span class="i">i</span></div></div><div class="a">36~41</div><div class="b">38.50</div><svg class="iy" width="18" height="21"><use href="#yen"/></svg><svg class="im" width="21" height="18"><use href="#mail"/></svg><div class="c">0</div><div class="u">元/千克</div><div class="d">08-22</div><svg class="ch" width="21" height="24"><use href="#chart"/></svg></div>
<div class="r g" style="top:3996px"><div class="n"><div class="nc">多晶硅致密料<span class="i">i</span></div></div><div class="a">35~38</div><div class="b">36.50</div><svg class="iy" width="18" height="21"><use href="#yen"/></svg><svg class="im" width="21" height="18"><use href="#mail"/></svg><div class="c">0</div><div class="u">元/千克</div><div class="d">08-22</div><svg class="ch" width="21" height="24"><use href="#chart"/></svg></div>
<div class="r" style="top:4057px;border:0"><div class="n"><div class="nc">多晶硅菜花料<span class="i">i</span></div></div><div class="a">31~34</div><div class="b">32.50</div><svg class="iy" width="18" height="21"><use href="#yen"/></svg><svg class="im" width="21" height="18"><use href="#mail"/></svg><div class="c">0</div><div class="u">元/千克</div><div class="d">08-22</div><svg class="ch" width="21" height="24"><use href="#chart"/></svg></div>

<!-- 19 废金属 -->
<div class="sec" style="top:4117px;height:226px"><div class="bar" style="width:248px"></div><div class="tt">今日废金属现货价格</div><div class="lk" style="left:263px">企业报价</div><div class="lk bl" style="left:351px">加入报价</div><div class="sel" style="left:482px">江苏废铜<svg width="12" height="8"><use href="#dn"/></svg></div>
<svg class="ic" style="left:648px" width="20" height="22"><use href="#clk"/></svg><div class="tl" style="left:675px">历史价格</div><svg class="ic" style="left:763px" width="18" height="22"><use href="#fs"/></svg><div class="tl" style="left:788px">全屏查看</div></div>
<div class="r" style="top:4166px"><div class="n" style="padding-top:8px">光亮铜（Cu≈98）江苏</div><div class="a R">65600~65900</div><div class="b R">65750</div><svg class="iy" width="18" height="21"><use href="#yen"/></svg><svg class="im" width="21" height="18"><use href="#mail"/></svg><div class="c R">+100</div><div class="u">元/吨</div><div class="d">08-22</div><svg class="ch" width="21" height="24"><use href="#chart"/></svg></div>
<div class="r g" style="top:4226px"><div class="n"><div class="nc">火烧线（江苏）</div></div><div class="a R">64500~65300</div><div class="b R">64900</div><svg class="iy" width="18" height="21"><use href="#yen"/></svg><svg class="im" width="21" height="18"><use href="#mail"/></svg><div class="c R">+100</div><div class="u">元/吨</div><div class="d">08-22</div><svg class="ch" width="21" height="24"><use href="#chart"/></svg></div>
<div class="r" style="top:4287px;border:0"><div class="n"><div class="nc">缆粗（江苏）</div></div><div class="a R">65800~66200</div><div class="b R">66000</div><svg class="iy" width="18" height="21"><use href="#yen"/></svg><svg class="im" width="21" height="18"><use href="#mail"/></svg><div class="c R">+100</div><div class="u">元/吨</div><div class="d">08-22</div><svg class="ch" width="21" height="24"><use href="#chart"/></svg></div>

<!-- 20 半导体 -->
<div class="sec" style="top:4348px;height:238px"><div class="bar" style="width:248px"></div><div class="tt">今日半导体现货价格</div><div class="sel" style="left:482px">晶片<svg width="12" height="8"><use href="#dn"/></svg></div>
<svg class="ic" style="left:648px" width="20" height="22"><use href="#clk"/></svg><div class="tl" style="left:675px">历史价格</div><svg class="ic" style="left:763px" width="18" height="22"><use href="#fs"/></svg><div class="tl" style="left:788px">全屏查看</div></div>
<div class="strip" style="top:4395px;height:10px"></div>
<div class="r" style="top:4405px"><div class="n"><div class="nc">2寸磷化铟衬底</div></div><div class="a">1300~1400</div><div class="b">1350</div><svg class="iy" width="18" height="21"><use href="#yen"/></svg><svg class="im" width="21" height="18"><use href="#mail"/></svg><div class="c">0</div><div class="u">元/片</div><div class="d">08-22</div><svg class="ch" width="21" height="24"><use href="#chart"/></svg></div>
<div class="r g" style="top:4467px"><div class="n"><div class="nc">3寸磷化铟衬底</div></div><div class="a">1700~2550</div><div class="b">2125</div><svg class="iy" width="18" height="21"><use href="#yen"/></svg><svg class="im" width="21" height="18"><use href="#mail"/></svg><div class="c">0</div><div class="u">元/片</div><div class="d">08-22</div><svg class="ch" width="21" height="24"><use href="#chart"/></svg></div>
<div class="r" style="top:4528px;border:0"><div class="n"><div class="nc">4寸磷化铟衬底</div></div><div class="a">3900~5100</div><div class="b">4500</div><svg class="iy" width="18" height="21"><use href="#yen"/></svg><svg class="im" width="21" height="18"><use href="#mail"/></svg><div class="c">0</div><div class="u">元/片</div><div class="d">08-22</div><svg class="ch" width="21" height="24"><use href="#chart"/></svg></div>
</body></html>
